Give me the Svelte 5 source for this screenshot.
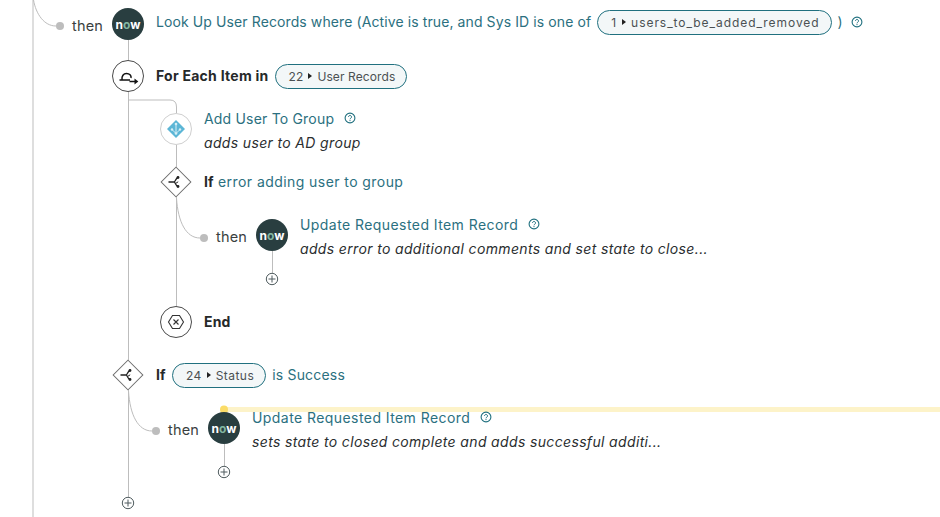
<script>
	// yellow marker + connectors live in one svg behind the rows
	const plusses = [[272, 279], [224, 472], [128, 503]];
</script>

{#snippet now()}
	<div class="node now"><span>n<em>o</em>w</span></div>
{/snippet}

{#snippet help()}
	<svg class="help" width="12" height="12" viewBox="0 0 12 12">
		<circle cx="6" cy="6" r="4.9" fill="none" stroke="#20707f" stroke-width="1.1" />
		<path d="M4.5 4.9a1.5 1.5 0 1 1 2.3 1.3c-.6.4-.8.6-.8 1.1" fill="none" stroke="#20707f" stroke-width="1" />
		<circle cx="6" cy="8.6" r=".6" fill="#20707f" />
	</svg>
{/snippet}

{#snippet branch()}
	<div class="node diamond">
		<svg width="16" height="16" viewBox="0 0 16 16">
			<path d="M.5 8H6C7.500 8 7.500 4 10 3.500M6 8C7.500 8 7.500 12 10 12.500" fill="none" stroke="#222" stroke-width="1.300" />
			<path d="M8 9.200L10.200 7.800" fill="none" stroke="#222" stroke-width="1" />
			<circle cx="10" cy="3.500" r="1.400" fill="#222" />
			<circle cx="10" cy="12.500" r="1.400" fill="#222" />
		</svg>
	</div>
{/snippet}

{#snippet pill(num, label, kind)}
	<span class="pill {kind}">{num}<i></i>{label}</span>
{/snippet}

<div class="canvas">
	<svg class="wires" width="940" height="517" viewBox="0 0 940 517">
		<g fill="none" stroke="#bdbdbd" stroke-width="1">
			<path d="M33 0V517" />
			<path d="M33.5 0C36 14 44 26 56 26" />
			<path d="M128.500 40V497" />
			<path d="M128.500 100H170Q176.500 100 176.500 107V113" />
			<path d="M176.500 145V306" />
			<path d="M176.500 198C178 222 186 238 200 238" />
			<path d="M272.500 251V273" />
			<path d="M128.500 391C130 415 138 431 152 431" />
			<path d="M224.500 444V466" />
		</g>
		<rect x="224" y="407" width="716" height="5" fill="#fdf3c9" />
		<circle cx="224" cy="409.500" r="4" fill="#fbdc68" />
		<g fill="#bdbdbd">
			<circle cx="60" cy="26" r="4" />
			<circle cx="204" cy="238" r="4" />
			<circle cx="156" cy="431" r="4" />
		</g>
		{#each plusses as [x, y]}
			<circle cx={x} cy={y} r="5.700" fill="#fff" stroke="#4f5b5e" stroke-width="1" />
			<path d="M{x - 3.500} {y}h7M{x} {y - 3.500}v7" stroke="#4f5b5e" stroke-width="1" />
		{/each}
	</svg>

	<div class="row h52 then d1">
		<span class="dot"></span><span class="then-label">then</span>
		{@render now()}
		<div class="line first">
			<span class="txt link tight">Look Up User Records where (Active is true, and Sys ID is one of</span>
			{@render pill(1, 'users_to_be_added_removed', 'var')}
			<span class="txt link paren">)</span>
			{@render help()}
		</div>
	</div>

	<div class="row h53 d1">
		<div class="node ring">
			<svg width="24" height="24" viewBox="0 0 24 24">
				<path d="M3.500 16H14M6 16C5.500 12 7.500 9.500 10.500 9.500S15.500 11.500 15 14" fill="none" stroke="#111" stroke-width="1.500" />
				<path d="M13.500 17.500H19.500" fill="none" stroke="#111" stroke-width="1.500" />
				<path d="M18.500 14.500L22.300 17.500L18.500 20.500Z" fill="#111" />
			</svg>
		</div>
		<div class="line">
			<b class="txt bold-each">For Each Item in</b>
			{@render pill(22, 'User Records', 'rec')}
		</div>
	</div>

	<div class="row h53 d2">
		<div class="node ring light">
			<svg width="22" height="22" viewBox="0 0 22 22">
				<path d="M11 2L20 11 11 20 2 11Z" fill="#5cb6d6" />
				<path d="M11 6V15.500M11 15.500L7 11.500M11 15.500L15 11.500" fill="none" stroke="#d5eef6" stroke-width="1" />
				<circle cx="11" cy="6" r="1.300" fill="#d5eef6" />
				<circle cx="7" cy="11.500" r="1.200" fill="#d5eef6" />
				<circle cx="15" cy="11.500" r="1.200" fill="#d5eef6" />
				<circle cx="11" cy="15.500" r="1.300" fill="#d5eef6" />
			</svg>
		</div>
		<div class="stack">
			<div class="title"><span class="link">Add User To Group</span>{@render help()}</div>
			<div class="desc">adds user to AD group</div>
		</div>
	</div>

	<div class="row h53 d2">
		{@render branch()}
		<div class="line">
			<span class="txt"><b>If</b> <span class="link wide">error adding user to group</span></span>
		</div>
	</div>

	<div class="row h87 then d3">
		<span class="dot"></span><span class="then-label">then</span>
		{@render now()}
		<div class="stack">
			<div class="title"><span class="link wide">Update Requested Item Record</span>{@render help()}</div>
			<div class="desc">adds error to additional comments and set state to close...</div>
		</div>
	</div>

	<div class="row h53 d2">
		<div class="node ring">
			<svg width="20" height="20" viewBox="0 0 20 20">
				<path d="M6.500 3.500H13.500L17.500 10 13.500 16.500H6.500L2.500 10Z" fill="none" stroke="#333" stroke-width="1.100" />
				<path d="M7.500 7.500L12.500 12.500M12.500 7.500L7.500 12.500" fill="none" stroke="#333" stroke-width="1.100" />
			</svg>
		</div>
		<div class="line"><b class="txt">End</b></div>
	</div>

	<div class="row h53 d1">
		{@render branch()}
		<div class="line">
			<b class="txt">If</b>
			{@render pill(24, 'Status', '')}
			<span class="txt link">is Success</span>
		</div>
	</div>

	<div class="row then d4">
		<span class="dot"></span><span class="then-label">then</span>
		{@render now()}
		<div class="stack">
			<div class="title"><span class="link wide">Update Requested Item Record</span>{@render help()}</div>
			<div class="desc">sets state to closed complete and adds successful additi...</div>
		</div>
	</div>
</div>

<style>
	:global(body) {
		background: #fff;
	}

	.canvas {
		position: relative;
		width: 940px;
		height: 517px;
		overflow: hidden;
		padding-top: 8px;
		box-sizing: border-box;
		font-family: Inter, "Liberation Sans", sans-serif;
		font-size: 14px;
		color: #2a2e2f;
	}

	.wires {
		position: absolute;
		left: 0;
		top: 0;
	}

	.row {
		position: relative;
		display: flex;
		align-items: flex-start;
		gap: 12px;
	}

	.h52 { height: 52px; }
	.h53 { height: 53px; }
	.h87 { height: 87px; }

	.d1 { margin-left: 112px; }
	.d2 { margin-left: 160px; }

	.then { gap: 0; }
	.then .node { margin-right: 12px; }
	.then.d1 { margin-left: 56px; }
	.then.d3 { margin-left: 200px; }
	.then.d4 { margin-left: 152px; }

	.dot {
		width: 8px;
		flex: none;
	}

	.then-label {
		width: 48px;
		flex: none;
		padding-left: 8px;
		box-sizing: border-box;
		font-size: 14.500px;
		line-height: 36px;
		letter-spacing: .2px;
		color: #3a3f40;
	}

	.node {
		width: 32px;
		height: 32px;
		flex: none;
		box-sizing: border-box;
		display: flex;
		align-items: center;
		justify-content: center;
		border-radius: 50%;
		background: #fff;
	}

	.now {
		background: #293e40;
		color: #fff;
		font-size: 12px;
		font-weight: 700;
		letter-spacing: .1px;
	}

	.now em {
		font-style: normal;
		color: #81b5a1;
	}

	.ring {
		border: 1px solid #4a4a4a;
	}

	.ring.light {
		border-color: #cfcfcf;
	}

	.diamond {
		position: relative;
		border-radius: 0;
		background: none;
	}

	.diamond::before {
		content: "";
		position: absolute;
		left: 5px;
		top: 5px;
		width: 22px;
		height: 22px;
		box-sizing: border-box;
		background: #fff;
		border: 1px solid #6f6f6f;
		transform: rotate(45deg);
	}

	.diamond svg {
		position: relative;
	}

	.line {
		height: 32px;
		display: flex;
		align-items: center;
		gap: 6px;
		white-space: nowrap;
		letter-spacing: .19px;
	}

	.line.first {
		margin-top: -2px;
	}

	.txt {
		margin-bottom: 2px;
	}

	.link {
		color: #2b7080;
	}

	.tight {
		letter-spacing: .1px;
	}

	.wide {
		letter-spacing: .43px;
	}

	.paren {
		margin-right: 2px;
	}

	b {
		font-weight: 700;
		color: #26292a;
	}

	.bold-each {
		letter-spacing: .26px;
	}

	.pill {
		display: inline-flex;
		align-items: center;
		height: 25px;
		box-sizing: border-box;
		padding: 0 11px 0 13px;
		border: 1.500px solid #20707f;
		border-radius: 13px;
		background: #f3f7f8;
		font-size: 12px;
		letter-spacing: .45px;
		color: #4b5153;
	}

	.pill.var {
		letter-spacing: .95px;
	}

	.pill.rec {
		letter-spacing: .1px;
	}

	.pill i {
		width: 0;
		height: 0;
		margin: 0 5px;
		border-left: 4px solid #222;
		border-top: 3.500px solid transparent;
		border-bottom: 3.500px solid transparent;
	}

	.stack {
		margin-top: -7px;
		white-space: nowrap;
		letter-spacing: .19px;
	}

	.title {
		height: 24px;
		display: flex;
		align-items: center;
		gap: 10px;
	}

	.desc {
		height: 25px;
		line-height: 25px;
		font-style: italic;
		letter-spacing: .35px;
		color: #2a2e2f;
	}
</style>
